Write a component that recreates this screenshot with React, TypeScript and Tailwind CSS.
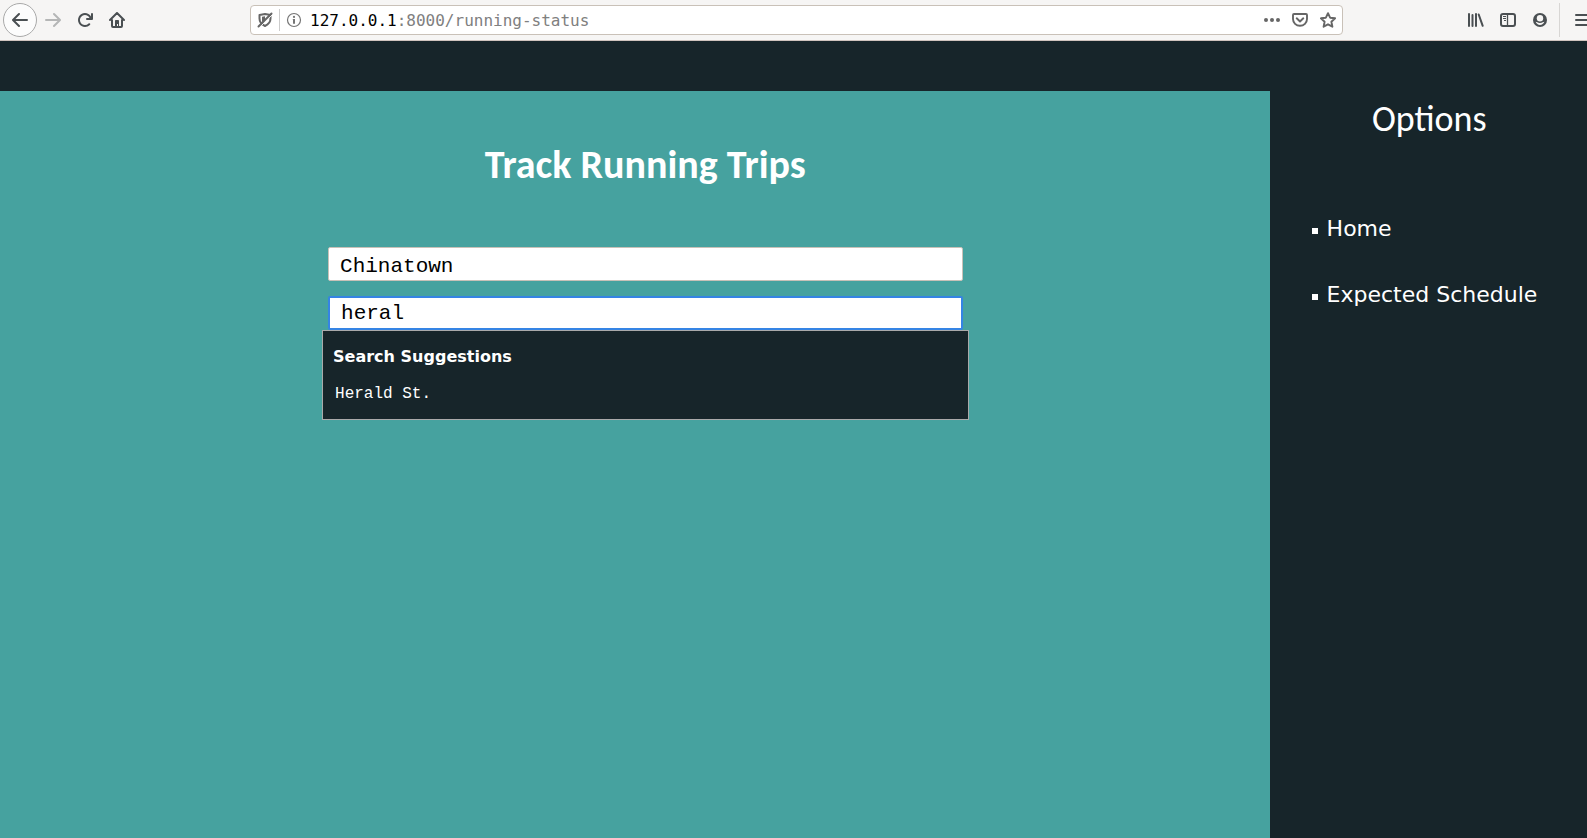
import type { ReactNode } from 'react';

function Icon({ children, className = 'text-[#4a4f52]' }: { children: ReactNode; className?: string }) {
  return (
    <svg viewBox="0 0 16 16" width="16" height="16" fill="currentColor" aria-hidden="true" className={`shrink-0 ${className}`}>
      {children}
    </svg>
  );
}

const ARROW =
  'M15 7H3.414l4.293-4.293a1 1 0 0 0-1.414-1.414l-6 6a1 1 0 0 0 0 1.414l6 6a1 1 0 0 0 1.414-1.414L3.414 9H15a1 1 0 0 0 0-2z';

function BrowserBar() {
  return (
    <header className="flex h-[41px] items-center border-b border-[#d0c4be] bg-[#f6f5f4] pl-[3px]">
      <nav aria-label="Browser navigation" className="flex items-center">
        <button aria-label="Back" className="flex size-[34px] items-center justify-center rounded-full border border-[#a9a9a9] bg-[#fcfcfc]">
          <Icon><path d={ARROW} /></Icon>
        </button>
        <button aria-label="Forward" className="flex h-8 w-8 items-center justify-center">
          <Icon className="text-[#b5b6b6]"><path transform="matrix(-1 0 0 1 16 0)" d={ARROW} /></Icon>
        </button>
        <button aria-label="Reload" className="flex h-8 w-8 items-center justify-center">
          <Icon>
            <path d="M15 1a1 1 0 0 0-1 1v2.418A6.995 6.995 0 1 0 8 15a6.954 6.954 0 0 0 4.950-2.050 1 1 0 0 0-1.414-1.414A5.019 5.019 0 1 1 12.549 6H10a1 1 0 0 0 0 2h5a1 1 0 0 0 1-1V2a1 1 0 0 0-1-1z" />
          </Icon>
        </button>
        <button aria-label="Home" className="flex h-8 w-8 items-center justify-center">
          <Icon>
            <path d="M1 8 8 1l7 7M3 8v6c0 .6.4 1 1 1h8c.6 0 1-.4 1-1V8" fill="none" stroke="currentColor" strokeWidth="2" strokeLinecap="round" strokeLinejoin="round" />
            <path d="M6 15V9c0-.6.4-1 1-1h2c.6 0 1 .4 1 1v6H9v-3H8v3z" />
          </Icon>
        </button>
      </nav>

      <div className="ml-[117px] flex h-[30px] min-w-0 flex-1 items-center rounded border border-[#c9c1b8] bg-white px-[6px]">
        <button aria-label="Tracking protection" className="flex w-4 shrink-0 justify-center">
          <Icon className="text-[#666]">
            <path d="M2.500 3 8 2l5.500 1v3.500c0 3.400-2 5.900-5.500 7.500-3.500-1.600-5.500-4.100-5.500-7.500z" fill="none" stroke="currentColor" strokeWidth="2" strokeLinejoin="round" />
            <path d="M5 4.800 8 4.300v4.200l-2 2.500L5 9z" />
            <path d="M2 16 16 2" stroke="#fff" strokeWidth="1" />
            <path d="M1.500 14.500 14.500 1.500" stroke="currentColor" strokeWidth="2" strokeLinecap="round" />
          </Icon>
        </button>
        <span className="ml-[6px] h-[22px] w-px shrink-0 bg-[#ccc]" />
        <button aria-label="Site information" className="ml-[6px] shrink-0">
          <Icon className="text-[#757575]">
            <circle cx="8" cy="8" r="6.500" fill="none" stroke="currentColor" strokeWidth="1.200" />
            <circle cx="8" cy="4.900" r="1.100" />
            <path d="M6.800 7H9v4.800H7V8h-.2z" />
          </Icon>
        </button>
        <div className="ml-2 flex-1 whitespace-nowrap pt-px font-['DejaVu_Sans_Mono',monospace] text-base leading-6 text-[#808080]">
          <span className="text-black">127.0.0.1</span>:8000/running-status
        </div>
        <div className="flex items-center gap-3">
          <button aria-label="Page actions">
            <Icon className="text-[#666]">
              <circle cx="2" cy="8" r="2" /><circle cx="8" cy="8" r="2" /><circle cx="14" cy="8" r="2" />
            </Icon>
          </button>
          <button aria-label="Save to Pocket">
            <Icon className="text-[#666]">
              <path d="M2 2h12c.6 0 1 .4 1 1v4a7 6.800 0 0 1-14 0V3c0-.6.4-1 1-1z" fill="none" stroke="currentColor" strokeWidth="1.900" />
              <path d="m4.700 6.300 3.300 3.200 3.300-3.200" fill="none" stroke="currentColor" strokeWidth="1.900" strokeLinecap="round" strokeLinejoin="round" />
            </Icon>
          </button>
          <button aria-label="Bookmark this page">
            <Icon className="text-[#666]">
              <path d="m8 1.200 2.100 4.500 5 .6-3.700 3.400 1 5L8 12.300l-4.400 2.400 1-5L.9 6.300l5-.6z" fill="none" stroke="currentColor" strokeWidth="1.900" strokeLinejoin="round" />
            </Icon>
          </button>
        </div>
      </div>

      <div className="ml-[125px] flex items-center">
        <button aria-label="Library">
          <Icon>
            <path d="M1 2v12M4.500 3v11M8 2v12M10.700 2.500l4 11.300" fill="none" stroke="currentColor" strokeWidth="2" strokeLinecap="round" />
          </Icon>
        </button>
        <button aria-label="Sidebars" className="ml-4">
          <Icon>
            <rect x="1" y="2" width="14" height="12" rx="2" fill="none" stroke="currentColor" strokeWidth="2" />
            <path d="M7.500 2v12" stroke="currentColor" strokeWidth="1.300" />
            <path d="M3 4.500h3M3 6.500h3M4 8.500h2" stroke="currentColor" strokeWidth="1" />
          </Icon>
        </button>
        <button aria-label="Account" className="ml-4">
          <Icon>
            <circle cx="8" cy="8" r="7" />
            <circle cx="8" cy="6.200" r="3.200" fill="#f6f5f4" />
            <path d="M3.600 9.800c1.200 0 1.800 1.200 4.400 1.200s3.200-1.200 4.400-1.200C11.700 11.700 10 13 8 13s-3.700-1.300-4.400-3.200z" fill="#f6f5f4" />
          </Icon>
        </button>
        <span className="ml-[11px] h-[34px] w-px bg-[#d8d6d4]" />
        <button aria-label="Open menu" className="ml-[15px] w-3 overflow-hidden">
          <Icon>
            <path d="M1 3h14M1 8h14M1 13h14" stroke="currentColor" strokeWidth="2" strokeLinecap="round" />
          </Icon>
        </button>
      </div>
    </header>
  );
}

function TripSearch() {
  const field = "block w-full rounded-[2px] bg-white px-[11px] font-['Liberation_Mono',monospace] text-[21px] leading-6 text-black outline-none";
  return (
    <main className="w-4/5 bg-[#46a29f]">
      <h1 className="pt-12 pl-[21px] text-center font-[Carlito,Lato,sans-serif] text-[40px] leading-[52px] font-bold">
        Track Running Trips
      </h1>
      <form className="mt-14 ml-[calc(24.5%+11px)] w-[calc(51%-1px)]">
        <div className="space-y-[15px] px-[6px]">
          <input aria-label="Starting stop" defaultValue="Chinatown" className={`${field} h-[34px] border border-[#c9c1b8] pt-1`} />
          <input aria-label="Destination stop" defaultValue="heral" className={`${field} h-[34px] border-2 border-[#3584e4]`} />
        </div>
        <section className="border border-[#aaa] bg-[#17252a] px-[10px] pt-[14px] pb-[13px]">
          <h2 className="text-base leading-6 font-bold">Search Suggestions</h2>
          <button type="button" className="mt-[13px] block px-[2px] font-['Liberation_Mono',monospace] text-base leading-6">
            Herald St.
          </button>
        </section>
      </form>
    </main>
  );
}

function OptionsPanel() {
  return (
    <aside className="flex-1">
      <h2 className="mt-1 pl-[2px] text-center font-[Carlito,Lato,sans-serif] text-[36px] leading-[48px]">Options</h2>
      <ul className="mt-[71px] space-y-9 pl-[42px] text-[22px] leading-[30px]">
        {['Home', 'Expected Schedule'].map((label) => (
          <li key={label} className="flex items-center gap-[9px]">
            <span className="mt-1 size-[6px] bg-white" />
            <a href="#" className="whitespace-nowrap">{label}</a>
          </li>
        ))}
      </ul>
    </aside>
  );
}

export default function App() {
  return (
    <div className="flex min-h-screen flex-col bg-[#17252a] font-['DejaVu_Sans',sans-serif] text-white">
      <BrowserBar />
      <div className="mt-[50px] flex flex-1">
        <TripSearch />
        <OptionsPanel />
      </div>
    </div>
  );
}
